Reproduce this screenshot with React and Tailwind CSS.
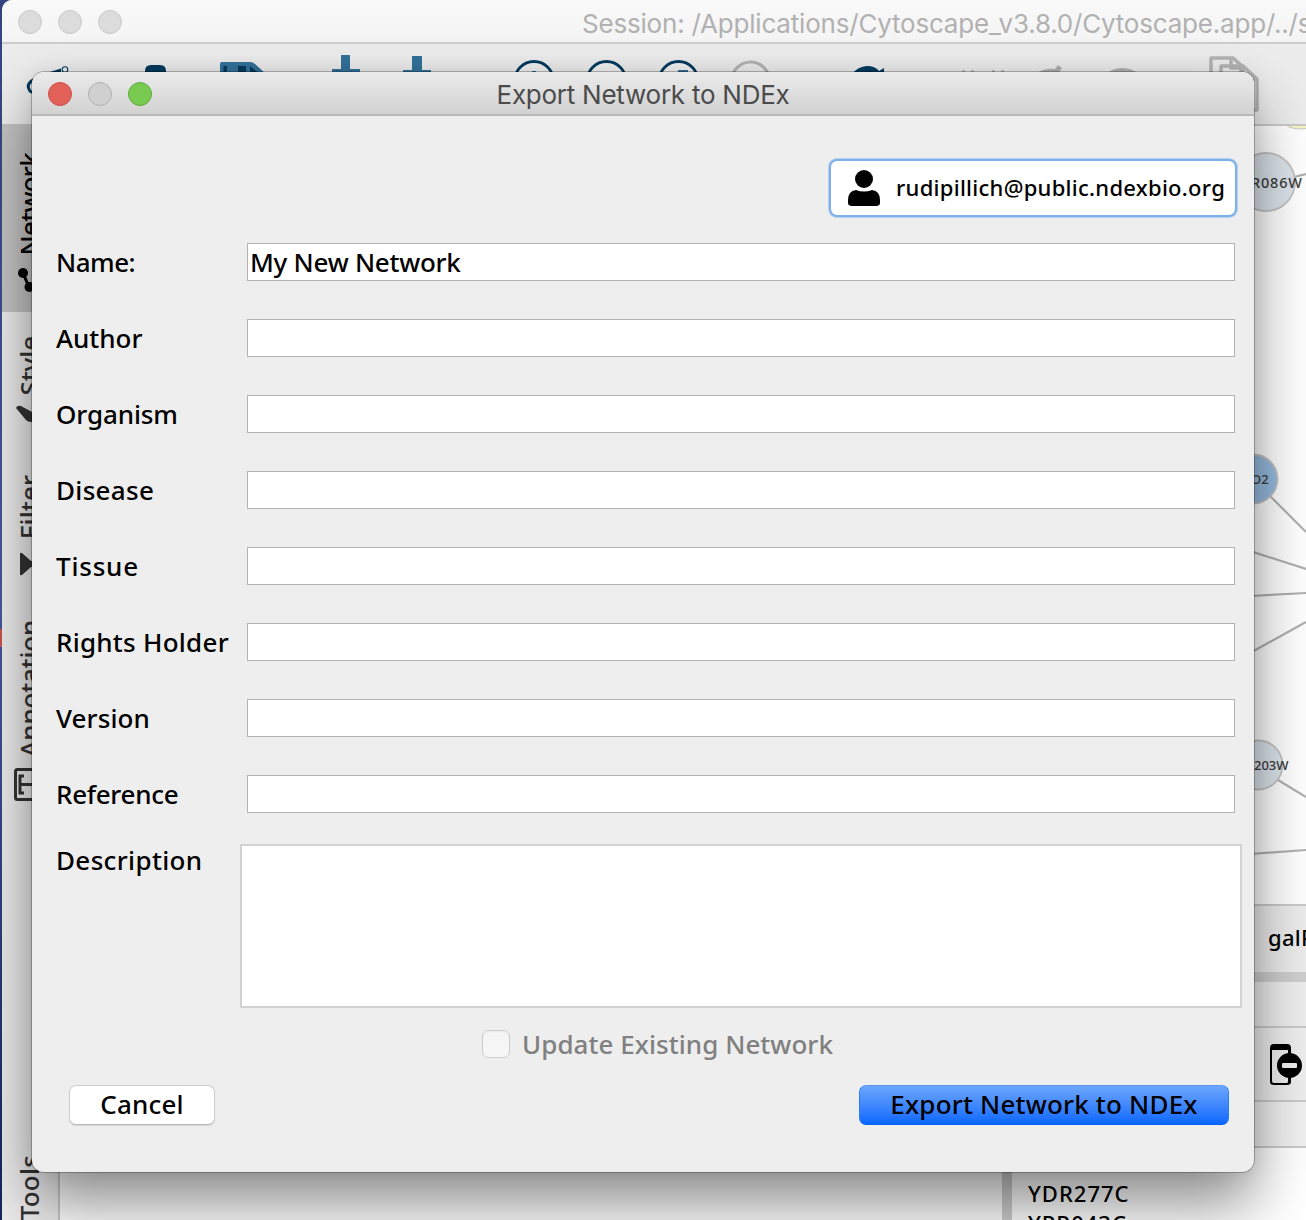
import React from "react";

const BODY = "font-['Noto_Sans',sans-serif]";

const FIELDS = [
  { label: "Name:", track: "tracking-[-0.5px]", value: "My New Network" },
  { label: "Author", track: "tracking-[0px]" },
  { label: "Organism", track: "tracking-[-0.1px]" },
  { label: "Disease", track: "tracking-[0.3px]" },
  { label: "Tissue", track: "tracking-[0.8px]" },
  { label: "Rights Holder", track: "tracking-[0.25px]" },
  { label: "Version", track: "tracking-[0.1px]" },
  { label: "Reference", track: "tracking-[-0.3px]" },
];

function Light({ className }) {
  return <span className={`block h-6 w-6 shrink-0 rounded-full border ${className}`} />;
}

function ToolbarIcons() {
  return (
    <svg className="block h-[80px] w-[1304px]" viewBox="2 44 1304 80" fill="none">
      <path d="M36 79c-7 2-9 7-7 10 1 4 5 4 9 1" stroke="#023a5d" strokeWidth="3" />
      <path d="M48 72.500l13-4v6H48z" fill="#023a5d" />
      <circle cx="65" cy="69.500" r="2.800" stroke="#023a5d" strokeWidth="1.100" />
      <path d="M145 80V71q0-6 6-6h9q6 0 6 6v9z" fill="#023a5d" />
      <path d="M220 80V64q0-2 2-2h28q3 0 5 2l10 9v7z" fill="#337199" />
      <path d="M223.500 66h3.500v10h-3.500zM238 66h8v10h-8zM250 66l11 9v2h-11z" fill="#023a5d" />
      <path d="M341 55h9v14h10v6h-28v-6h9zM412 56h10v14h9v6h-28v-6h9z" fill="#337199" />
      <g stroke="#023a5d" strokeWidth="2.800">
        <circle cx="534" cy="81" r="19.500" fill="#f1f1f1" />
        <circle cx="606.500" cy="81" r="19.500" fill="#f1f1f1" />
        <circle cx="678.500" cy="81" r="19.500" fill="#f1f1f1" />
      </g>
      <path d="M532 71h4v4h-4zM678 70h10v4h-10z" fill="#337199" />
      <circle cx="750.500" cy="81" r="19" stroke="#b3b3b3" strokeWidth="3" />
      <path d="M850 76q8-10 17-10 8 0 12 5l5-3v8z" fill="#023a5d" />
      <path d="M962 70h3v3h-3zM971 70h3v3h-3zM992 70h3v3h-3zM1001 70h3v3h-3z" fill="#bdbdbd" />
      <path d="M1035 74q9-6 20-5l3-4 4 3-5 8zM1106 74q7-6 16-6 10 0 17 6z" fill="#b0b0b0" />
      <g stroke="#b3b3b3" strokeWidth="3.500" strokeLinejoin="round">
        <path d="M1225 100h-14V58h22l10 9v12" />
        <path d="M1231 58v10h12" />
        <path d="M1221 80V66h22l14 13v31h-34z" />
        <path d="M1241 66v14h14" />
      </g>
    </svg>
  );
}

function SideTab({ className, textClass, label, children }) {
  return (
    <div className={`flex w-full flex-col items-start justify-end ${className}`}>
      <span
        className={`ml-[10px] h-max w-[35px] rotate-180 text-[26px] leading-[35px] font-medium whitespace-nowrap [writing-mode:vertical-rl] ${textClass}`}
      >
        {label}
      </span>
      {children}
    </div>
  );
}

function Sidebar() {
  return (
    <div className="flex w-[58px] shrink-0 flex-col border-r-2 border-[#c8c8c8] bg-[#ececec] text-[#333]">
      <SideTab label="Network" className="h-[188px] bg-[#c3c3c3] pb-[18px] text-black" textClass="tracking-[-0.7px]">
        <svg className="mt-[11px] ml-[16px] block h-[27px] w-[28px]" viewBox="18 267 28 27">
          <path d="M23 273l6 14h12" stroke="#000" strokeWidth="3" fill="none" />
          <circle cx="23" cy="273" r="5" />
          <circle cx="29.500" cy="287" r="5" />
          <circle cx="41" cy="287" r="5" />
        </svg>
      </SideTab>
      <SideTab label="Style" className="h-[130px] pb-[18px]" textClass="tracking-[-0.1px]">
        <svg className="mt-[9px] ml-[13px] block h-[20px] w-[30px]" viewBox="15 404 30 20" fill="#333">
          <path d="M16 408q1-3 5-2l11 6q6 2 8 5v5h-9q-3 0-5-2z" />
        </svg>
      </SideTab>
      <SideTab label="Filter" className="h-[152px] pb-[18px]" textClass="tracking-[0.1px]">
        <svg className="mt-[13px] ml-[16px] block h-[24px] w-[28px]" viewBox="18 552 28 24" fill="#333">
          <path d="M20 554q0-2 2-1l9 8h9v6h-9l-9 8q-2 1-2-1z" />
        </svg>
      </SideTab>
      <SideTab label="Annotation" className="h-[225px] pb-[18px]" textClass="tracking-[-0.2px]">
        <svg className="mt-[10px] ml-[12px] block h-[33px] w-[34px]" viewBox="14 768 34 33" fill="none" stroke="#333" strokeWidth="3">
          <rect x="15.500" y="769.500" width="30" height="30" rx="2" />
          <path d="M24 776h-4v17h4M20 784.500h17M37 780v9" />
        </svg>
      </SideTab>
      <div className="min-h-0 flex-1" />
      <SideTab label="Tools" className="h-[70px]" textClass="tracking-[0.2px]" />
    </div>
  );
}

function NetworkCanvas() {
  return (
    <div className="h-[778px] shrink-0 bg-white">
      <svg className="ml-auto block h-[778px] w-[66px]" viewBox="1240 127 66 778">
        <ellipse cx="1301" cy="122" rx="18" ry="8" fill="#f5f5c4" stroke="#c8c8c8" />
        <g stroke="#b0b0b0" strokeWidth="2.200">
          <path d="M1294 178l12-3M1270 497l36 36M1250 552l56 18M1250 597l56-3M1250 654l56-31M1278 781l28 17M1250 855l56-4" />
        </g>
        <g stroke="#c4c4c4" strokeWidth="1.800">
          <circle cx="1266" cy="183" r="29" fill="#dce4ea" />
          <circle cx="1253" cy="480" r="24.500" fill="#97bce0" />
          <circle cx="1258" cy="766" r="24.500" fill="#dce6ec" />
        </g>
        <g fill="#3c3c3c" className="font-['Noto_Sans',sans-serif] font-medium">
          <text x="1251" y="189" fontSize="14.500" textLength="51">R086W</text>
          <text x="1251" y="485" fontSize="13">O2</text>
          <text x="1254" y="771" fontSize="13">203W</text>
        </g>
      </svg>
    </div>
  );
}

function MainWindow() {
  return (
    <div className="ml-[2px] flex h-[1220px] w-[1304px] flex-col overflow-hidden rounded-tl-[10px] bg-[#ececec]">
      <div className="flex h-[44px] shrink-0 items-center gap-4 border-b-2 border-[#cdcdcd] bg-gradient-to-b from-[#f9f9f9] to-[#f4f4f4] pt-[2px] pl-4">
        <Light className="border-[#c8c8c8] bg-[#dcdcdc]" />
        <Light className="border-[#c8c8c8] bg-[#dcdcdc]" />
        <Light className="border-[#c8c8c8] bg-[#dcdcdc]" />
        <span className="ml-[444px] pt-[2px] font-['Inter',sans-serif] text-[26px] tracking-[-0.2px] whitespace-nowrap text-[#b1b1b1]">
          Session: /Applications/Cytoscape_v3.8.0/Cytoscape.app/../s
        </span>
      </div>
      <div className="h-[80px] shrink-0 bg-[#ececec]">
        <ToolbarIcons />
      </div>
      <div className="flex min-h-0 flex-1">
        <Sidebar />
        <div className="flex min-w-0 flex-1 flex-col border-t-2 border-[#cacaca]">
          <NetworkCanvas />
          <div className="flex h-[68px] shrink-0 items-center border-t-2 border-[#cacaca] bg-[#ececec] pb-[3px]">
            <span className="ml-[1208px] text-[22px] font-medium tracking-[0.3px] text-black">galF</span>
          </div>
          <div className="h-[10px] shrink-0 bg-[#cfcfcf]" />
          <div className="h-[44px] shrink-0 bg-[#eeeeee]" />
          <div className="flex h-[74px] shrink-0 items-center border-t-2 border-[#cacaca] bg-[#eeeeee] pt-[2px]">
            <svg className="ml-[1210px] block h-[42px] w-[34px]" viewBox="0 0 34 42">
              <path d="M4 0h13q4 0 4 4v34q0 3-4 3H4q-4 0-4-3V4q0-4 4-4zM2 6v31q0 2 2 2h13q1 0 1-2V6z" fillRule="evenodd" />
              <circle cx="19.500" cy="21.500" r="12.500" />
              <rect x="12" y="19" width="15" height="5" rx="1" fill="#eee" />
            </svg>
          </div>
          <div className="h-[46px] shrink-0 border-t-2 border-[#cacaca] bg-[#f1f1f1]" />
          <div className="flex min-h-0 flex-1 border-t-2 border-[#cacaca] bg-white">
            <div className="w-[942px] shrink-0" />
            <div className="w-[10px] shrink-0 bg-[#cfcfcf]" />
            <div className="flex flex-col pt-[30px] pl-4 text-[22px] leading-[30px] font-medium tracking-[1px] text-black">
              <span>YDR277C</span>
              <span>YPR043C</span>
            </div>
          </div>
        </div>
      </div>
    </div>
  );
}

function ExportDialog() {
  return (
    <div className="absolute top-[72px] left-[32px] flex h-[1100px] w-[1222px] flex-col overflow-visible rounded-[12px] bg-[#eeeeee] shadow-[0_0_0_1px_rgba(0,0,0,0.25),0_32px_60px_rgba(0,0,0,0.45),0_0_20px_rgba(0,0,0,0.08)]">
      <div className="relative flex h-[44px] shrink-0 items-center gap-4 rounded-t-[12px] border-b-2 border-[#b8b8b8] bg-gradient-to-b from-[#ebebeb] to-[#d2d2d2] pt-[2px] pl-4">
        <Light className="border-[#cd4a45] bg-[#e2625a]" />
        <Light className="border-[#b0b0b0] bg-[#d0d0d0]" />
        <Light className="border-[#5eac3c] bg-[#78cb50]" />
        <span className="absolute inset-x-0 top-[4px] text-center font-['Inter',sans-serif] text-[26px] leading-[38px] tracking-[-0.25px] text-[#4b4b4b]">
          Export Network to NDEx
        </span>
      </div>

      <div className="flex justify-end pt-[43px] pr-[17px]">
        <button className="flex h-[58px] w-[408px] items-center rounded-[8px] border-2 border-[#7db1ec] bg-white pl-[17px] shadow-[0_0_0_1px_rgba(125,177,236,0.5)]">
          <svg className="block h-9 w-8 shrink-0" viewBox="0 0 32 36">
            <circle cx="16" cy="9" r="9" />
            <path d="M8 20q8 3 16 0 8 1 8 10v3q0 3-4 3H4q-4 0-4-3v-3q0-9 8-10z" />
          </svg>
          <span className="ml-[16px] pb-[2px] text-[22px] font-medium tracking-[0.27px] whitespace-nowrap text-black">
            rudipillich@public.ndexbio.org
          </span>
        </button>
      </div>

      <div className="mt-[26px] flex flex-col gap-[38px] pl-6">
        {FIELDS.map((field) => (
          <div key={field.label} className="flex h-[38px] items-center">
            <label className={`w-[191px] shrink-0 text-[26px] leading-[38px] font-medium whitespace-nowrap text-black ${field.track}`}>
              {field.label}
            </label>
            <div className="h-[38px] w-[988px] border border-[#b3b3b3] bg-white pl-[2px] text-[26px] leading-[36px] font-medium tracking-[-0.25px] text-black">
              {field.value}
            </div>
          </div>
        ))}
      </div>

      <div className="mt-[31px] flex pl-6">
        <label className="w-[184px] shrink-0 text-[26px] leading-[32px] font-medium tracking-[0.35px] text-black">Description</label>
        <div className="h-[164px] w-[1002px] border-2 border-[#d2d2d2] bg-white" />
      </div>

      <div className="mt-[22px] flex h-[28px] items-center pl-[450px]">
        <span className="block h-7 w-7 rounded-[6px] border border-[#cfcfcf] bg-[#f6f6f6] shadow-[inset_0_1px_2px_rgba(0,0,0,0.06)]" />
        <span className="ml-[12px] text-[26px] font-medium tracking-[0.05px] whitespace-nowrap text-[#808080]">
          Update Existing Network
        </span>
      </div>

      <div className="mt-[27px] flex justify-between pr-[25px] pl-[37px]">
        <button className="h-[40px] w-[146px] rounded-[7px] border border-[#cdcdcd] border-b-[#b8b8b8] bg-white pb-[2px] text-[26px] leading-[36px] font-medium tracking-[0.2px] text-black shadow-[0_1px_1px_rgba(0,0,0,0.1)]">
          Cancel
        </button>
        <button className="h-[40px] w-[370px] rounded-[7px] border border-t-[#5a98f5] border-r-[#2a7cf6] border-b-[#0a60f0] border-l-[#2a7cf6] bg-gradient-to-b from-[#6ca6fc] to-[#0566ff] pb-[2px] text-[26px] leading-[36px] font-medium tracking-[0.2px] whitespace-nowrap text-black">
          Export Network to NDEx
        </button>
      </div>
    </div>
  );
}

export default function App() {
  return (
    <div className={`relative h-[1220px] w-[1306px] overflow-hidden bg-gradient-to-b from-[#35437f] via-[#44599f] to-[#17265f] ${BODY}`}>
      <span className="absolute top-[629px] left-0 h-[18px] w-[2px] bg-[#c8524d]" />
      <MainWindow />
      <ExportDialog />
    </div>
  );
}
